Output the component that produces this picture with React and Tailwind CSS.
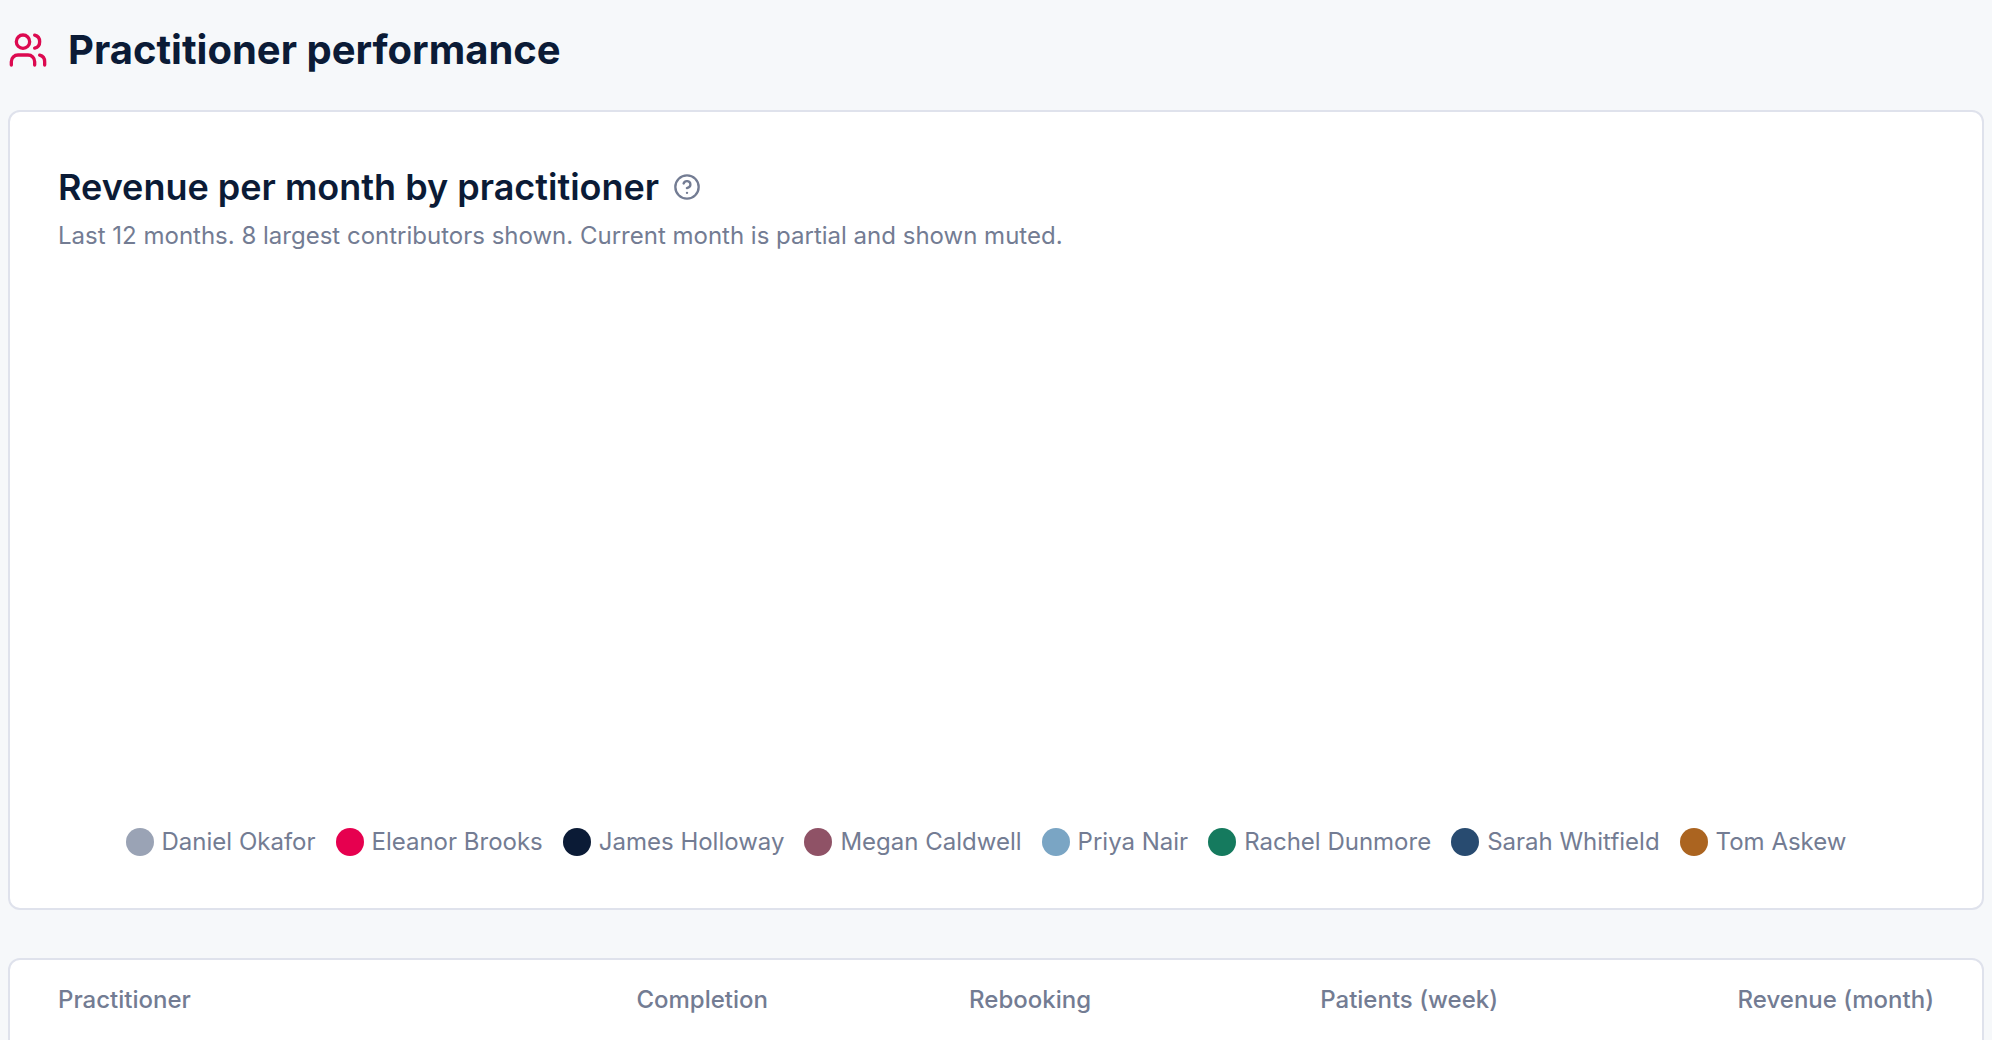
import React from 'react';
import { Users, CircleHelp } from 'lucide-react';

const practitioners = [
  { name: 'Daniel Okafor', color: 'bg-[#9aa3b5]' },
  { name: 'Eleanor Brooks', color: 'bg-[#e6004f]' },
  { name: 'James Holloway', color: 'bg-[#0b1b36]' },
  { name: 'Megan Caldwell', color: 'bg-[#8f5266]' },
  { name: 'Priya Nair', color: 'bg-[#7aa5c4]' },
  { name: 'Rachel Dunmore', color: 'bg-[#157a5e]' },
  { name: 'Sarah Whitfield', color: 'bg-[#284b70]' },
  { name: 'Tom Askew', color: 'bg-[#ab6420]' },
];

const columns = [
  { label: 'Practitioner', className: 'text-left' },
  { label: 'Completion', className: 'w-[232px] text-right' },
  { label: 'Rebooking', className: 'w-[323px] text-right' },
  { label: 'Patients (week)', className: 'w-[407px] text-right' },
  { label: 'Revenue (month)', className: 'w-[436px] text-right' },
];

export default function App() {
  return (
    <div className="h-screen overflow-hidden bg-[#f6f8fa] px-2 font-['Inter',sans-serif] text-[#0b1b36]">
      <header className="flex h-[110px] items-center gap-5 pb-2.5">
        <Users className="size-10 text-[#dc0a50]" />
        <h1 className="text-[40px] leading-[48px] font-bold">Practitioner performance</h1>
      </header>
      <section className="rounded-xl border-2 border-[#dfe2ec] bg-white px-12 py-12">
        <div className="flex items-center gap-3.5">
          <h2 className="text-[36px] leading-[54px] font-semibold">Revenue per month by practitioner</h2>
          <button type="button" aria-label="About this chart" className="text-[#737c93]">
            <CircleHelp className="size-7" />
          </button>
        </div>
        <p className="mt-0.5 text-[24px] leading-[40px] text-[#737c93]">
          Last 12 months. 8 largest contributors shown. Current month is partial and shown muted.
        </p>
        <div className="h-[568px]" />
        <ul className="flex justify-center gap-5 pr-5 text-[24px] leading-[36px] text-[#737c93]">
          {practitioners.map((p) => (
            <li key={p.name} className="flex items-center gap-2">
              <span className={`size-7 rounded-full ${p.color}`} />
              {p.name}
            </li>
          ))}
        </ul>
      </section>
      <section className="mt-12 rounded-xl border-2 border-[#dfe2ec] bg-white px-12 pb-12">
        <table className="w-full table-fixed text-[24px] text-[#737c93]">
          <thead>
            <tr className="h-20">
              {columns.map((c) => (
                <th key={c.label} scope="col" className={`font-medium ${c.className}`}>{c.label}</th>
              ))}
            </tr>
          </thead>
        </table>
      </section>
    </div>
  );
}
